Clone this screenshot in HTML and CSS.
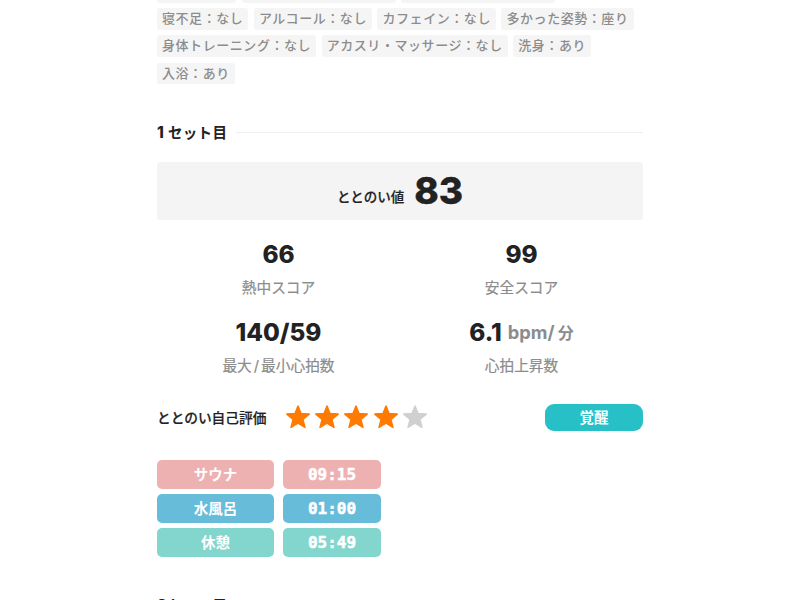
FILE: index.html
```html
<!DOCTYPE html>
<html lang="ja">
<head>
    <meta charset="UTF-8">
    <meta name="viewport" content="width=device-width, initial-scale=1.0">
    <title>ととのい記録</title>
    <link rel="stylesheet" href="styles.css">
</head>
<body>
    <main class="log">
        <div class="tags">
            <span class="tag w-s"></span>
            <span class="tag w-l"></span>
            <span class="tag w-l"></span>
            <span class="tag">寝不足：なし</span>
            <span class="tag">アルコール：なし</span>
            <span class="tag">カフェイン：なし</span>
            <span class="tag">多かった姿勢：座り</span>
            <span class="tag">身体トレーニング：なし</span>
            <span class="tag">アカスリ・マッサージ：なし</span>
            <span class="tag">洗身：あり</span>
            <span class="tag">入浴：あり</span>
        </div>

        <h2 class="set-title"><span class="heading"><span class="num">1</span>セット目</span></h2>

        <div class="total">
            <span class="total-label">ととのい値</span>
            <span class="total-value">83</span>
        </div>

        <dl class="scores">
            <div class="score">
                <dd>66</dd>
                <dt>熱中スコア</dt>
            </div>
            <div class="score">
                <dd>99</dd>
                <dt>安全スコア</dt>
            </div>
            <div class="score">
                <dd>140/59</dd>
                <dt>最大<span class="slash">/</span>最小心拍数</dt>
            </div>
            <div class="score">
                <dd>6.1<span class="unit">bpm/<span class="per">分</span></span></dd>
                <dt>心拍上昇数</dt>
            </div>
        </dl>

        <div class="rating">
            <span class="rating-label">ととのい自己評価</span>
            <div class="stars">
                <svg class="star on" viewBox="0 0 26 26"><path d="M13 2 L16 9.6 L24.2 10.1 L17.9 15.4 L20 23.4 L13 19 L6 23.4 L8.1 15.4 L1.8 10.1 L10 9.6 Z"/></svg>
                <svg class="star on" viewBox="0 0 26 26"><path d="M13 2 L16 9.6 L24.2 10.1 L17.9 15.4 L20 23.4 L13 19 L6 23.4 L8.1 15.4 L1.8 10.1 L10 9.6 Z"/></svg>
                <svg class="star on" viewBox="0 0 26 26"><path d="M13 2 L16 9.6 L24.2 10.1 L17.9 15.4 L20 23.4 L13 19 L6 23.4 L8.1 15.4 L1.8 10.1 L10 9.6 Z"/></svg>
                <svg class="star on" viewBox="0 0 26 26"><path d="M13 2 L16 9.6 L24.2 10.1 L17.9 15.4 L20 23.4 L13 19 L6 23.4 L8.1 15.4 L1.8 10.1 L10 9.6 Z"/></svg>
                <svg class="star" viewBox="0 0 26 26"><path d="M13 2 L16 9.6 L24.2 10.1 L17.9 15.4 L20 23.4 L13 19 L6 23.4 L8.1 15.4 L1.8 10.1 L10 9.6 Z"/></svg>
            </div>
            <span class="state">覚醒</span>
        </div>

        <div class="times">
            <span class="cell sauna">サウナ</span>
            <span class="cell sauna time">09:15</span>
            <span class="cell water">水風呂</span>
            <span class="cell water time">01:00</span>
            <span class="cell rest">休憩</span>
            <span class="cell rest time">05:49</span>
        </div>

        <h2 class="set-title next"><span class="heading"><span class="num">2</span>セット目</span></h2>
    </main>
</body>
</html>
```

FILE: styles.css
```css
* {
    box-sizing: border-box;
}
body {
    margin: 0;
    height: 600px;
    overflow: hidden;
    background: #fff;
    color: #222;
    font-family: Inter, "Noto Sans CJK JP", sans-serif;
}
.log {
    width: 486px;
    margin: -19px auto 0;
}
.tags {
    display: flex;
    flex-wrap: wrap;
    gap: 5.5px;
}
.tag {
    height: 21.7px;
    padding: 0 5px;
    border-radius: 3px;
    background: #f5f5f5;
    color: #8c8c8c;
    font-size: 13px;
    font-weight: 500;
    line-height: 21px;
    letter-spacing: 0.56px;
    white-space: nowrap;
}
.w-s {
    width: 79px;
}
.w-l {
    width: 154px;
}
.set-title {
    display: flex;
    align-items: center;
    height: 22px;
    margin: 37px 0 0;
    font-size: 14.5px;
    font-weight: 700;
    letter-spacing: 0.3px;
}
.set-title::after {
    content: "";
    flex: 1;
    height: 1px;
    margin-left: 9px;
    background: #f0f0f0;
}
.heading {
    padding-top: 2px;
    line-height: 22px;
}
.num {
    display: inline-block;
    width: 11px;
    font-size: 15.5px;
    font-weight: 800;
}
.total {
    display: flex;
    align-items: baseline;
    justify-content: center;
    gap: 10px;
    height: 58px;
    margin-top: 19px;
    border-radius: 3px;
    background: #f4f4f4;
    line-height: 58px;
}
.total-label {
    transform: translateY(-2px);
    font-size: 13.5px;
    font-weight: 500;
    -webkit-text-stroke: 0.2px #222;
}
.total-value {
    font-size: 37px;
    font-weight: 800;
    -webkit-text-stroke: 0.3px #222;
}
.scores {
    display: grid;
    grid-template-columns: 1fr 1fr;
    row-gap: 17.5px;
    margin: 20px 0 0;
    text-align: center;
}
.score {
    display: flex;
    flex-direction: column;
    height: 60px;
}
.score dd {
    height: 30px;
    margin: 0;
    font-size: 24.3px;
    font-weight: 800;
    line-height: 28px;
}
.score dt {
    margin-top: 7px;
    color: #8c8c8c;
    font-size: 14.7px;
    line-height: 22px;
    -webkit-text-stroke: 0.2px #8c8c8c;
}
.slash {
    padding: 0 2px;
}
.unit {
    margin-left: 6px;
    color: #8c8c8c;
    font-size: 18.3px;
    font-weight: 700;
    line-height: 1;
    vertical-align: 1.5px;
}
.per {
    margin-left: 3px;
    font-size: 16px;
}
.rating {
    display: flex;
    align-items: center;
    height: 27px;
    margin-top: 26px;
}
.rating-label {
    width: 128px;
    font-size: 13.7px;
    font-weight: 500;
    -webkit-text-stroke: 0.2px #222;
}
.stars {
    display: flex;
    gap: 3.2px;
}
.star {
    width: 26px;
    height: 26px;
    fill: #d0d0d0;
    stroke: #d0d0d0;
    stroke-width: 1.5;
    stroke-linejoin: round;
}
.star.on {
    fill: #ff7a00;
    stroke: #ff7a00;
}
.state {
    width: 98px;
    height: 27px;
    margin-left: auto;
    border-radius: 9px;
    background: #27c0c7;
    color: #fff;
    font-size: 14.5px;
    font-weight: 700;
    line-height: 28px;
    text-align: center;
}
.times {
    display: grid;
    grid-template-columns: 117px 97.5px;
    gap: 5px 9.3px;
    margin-top: 29px;
}
.cell {
    height: 29px;
    border-radius: 5px;
    color: #fff;
    font-size: 14.5px;
    font-weight: 700;
    line-height: 30px;
    text-align: center;
}
.time {
    font-family: "DejaVu Sans Mono", "Liberation Mono", monospace;
    font-size: 16px;
    -webkit-text-stroke: 0.5px #fff;
}
.sauna {
    background: #edb1b1;
}
.water {
    background: #67bcda;
}
.rest {
    background: #82d6ce;
}
.next {
    margin-top: 37px;
}
```
